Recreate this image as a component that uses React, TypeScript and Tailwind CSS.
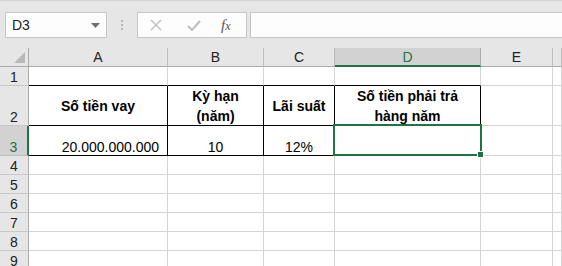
import type { ReactNode } from "react";

const green = "border-[#217346]";

type Cell = {
  text?: string;
  cls?: string;
  bold?: boolean;
  sel?: boolean;
  children?: ReactNode;
};

const ColHeader = ({ label, active }: { label: string; active?: boolean }) => (
  <div
    className={
      "flex items-center justify-center text-[14px] leading-none " +
      (active
        ? "bg-[#d2d2d2] text-[#217346] border-r border-r-[#ababab] border-b-2 border-b-[#217346]"
        : "bg-[#e6e6e6] text-[#222] border-r border-b border-[#bdbdbd] border-b-[#ababab]")
    }
  >
    {label}
  </div>
);

const RowHeader = ({ n, active }: { n: number; active?: boolean }) => (
  <div
    className={
      "flex items-end justify-center pb-[1px] text-[14px] leading-none " +
      (active
        ? "bg-[#d2d2d2] text-[#217346] border-r-2 border-r-[#217346] border-b border-b-[#bdbdbd]"
        : "bg-[#e6e6e6] text-[#222] border-r border-r-[#ababab] border-b border-b-[#c8c8c8]")
    }
  >
    {n}
  </div>
);

const GridCell = ({ text, cls = "", bold, sel, children }: Cell) => (
  <div
    className={
      "relative border-r border-b border-[#d4d4d4] text-[14px] text-black " +
      (bold ? "font-bold " : "") +
      cls
    }
  >
    {text}
    {children}
    {sel && (
      <>
        <div className={"absolute z-10 -top-[2px] -left-[2px] -right-[2px] -bottom-[1px] border-2 " + green} />
        <div className="absolute z-20 -right-[4px] -bottom-[3px] w-[7px] h-[7px] bg-[#217346] border border-white" />
      </>
    )}
  </div>
);

const blackRB = "border-r-black border-b-black";

export default function App() {
  const emptyRows = [4, 5, 6, 7, 8, 9];

  return (
    <div className="w-[562px] h-[266px] overflow-hidden bg-white font-['Liberation_Sans',Arial,sans-serif]">
      {/* formula bar */}
      <div className="h-[48px] bg-[#e6e6e6] border-t border-[#d2d2d2] flex items-start pt-[11px]">
        <div className="ml-[5px] w-[102px] h-[26px] bg-[#fdfdfd] border border-[#c6c6c6] flex items-center justify-between pl-[6px] pr-[6px]">
          <span className="text-[14px] text-[#222]">D3</span>
          <svg width="9" height="5" viewBox="0 0 9 5">
            <polygon points="0,0 9,0 4.5,5" fill="#707070" />
          </svg>
        </div>
        <div className="w-[30px] h-[26px] flex flex-col items-center justify-center gap-[2px]">
          <div className="w-[2px] h-[2px] bg-[#b4b4b4]" />
          <div className="w-[2px] h-[2px] bg-[#b4b4b4]" />
          <div className="w-[2px] h-[2px] bg-[#b4b4b4]" />
        </div>
        <div className="w-[110px] h-[26px] bg-[#fdfdfd] border border-[#c6c6c6] flex items-center pl-[12px]">
          <svg width="12" height="12" viewBox="0 0 12 12">
            <path d="M1 1 L11 11 M11 1 L1 11" stroke="#bdbdbd" strokeWidth="1.4" />
          </svg>
          <svg width="14" height="11" viewBox="0 0 14 11" className="ml-[25px]">
            <path d="M1 6 L5 10 L13 1" stroke="#bdbdbd" strokeWidth="2" fill="none" />
          </svg>
          <span className="ml-[20px] text-[15px] italic text-[#555] font-['Liberation_Serif',serif] leading-none">
            f<span className="text-[12px]">x</span>
          </span>
        </div>
        <div className="ml-[3px] flex-1 h-[26px] bg-[#fdfdfd] border-y border-l border-[#c6c6c6]" />
      </div>

      {/* sheet */}
      <div className="grid grid-cols-[29px_139px_96px_71px_146px_72px_1fr] grid-rows-[19px_19px_40px_30px_19px_19px_19px_19px_19px_19px]">
        {/* header row */}
        <div className="relative bg-[#e6e6e6] border-r border-b border-[#ababab]">
          <svg width="11" height="11" viewBox="0 0 11 11" className="absolute right-[3px] bottom-[3px]">
            <polygon points="11,0 11,11 0,11" fill="#b9b9b9" />
          </svg>
        </div>
        <ColHeader label="A" />
        <ColHeader label="B" />
        <ColHeader label="C" />
        <ColHeader label="D" active />
        <ColHeader label="E" />
        <ColHeader label="" />

        {/* row 1 */}
        <RowHeader n={1} />
        <GridCell cls="border-b-black" />
        <GridCell cls="border-b-black" />
        <GridCell cls="border-b-black" />
        <GridCell cls="border-b-black" />
        <GridCell />
        <GridCell />

        {/* row 2 */}
        <RowHeader n={2} />
        <GridCell bold text="Số tiền vay" cls={"flex items-center justify-center leading-[20px] " + blackRB} />
        <GridCell bold cls={"flex flex-col items-center justify-center leading-[20px] " + blackRB}>
          <span>Kỳ hạn</span>
          <span>(năm)</span>
        </GridCell>
        <GridCell bold text="Lãi suất" cls={"flex items-center justify-center leading-[20px] " + blackRB} />
        <GridCell bold cls={"flex flex-col items-center justify-center leading-[20px] " + blackRB}>
          <span>Số tiền phải trả</span>
          <span>hàng năm</span>
        </GridCell>
        <GridCell />
        <GridCell />

        {/* row 3 */}
        <RowHeader n={3} active />
        <GridCell text="20.000.000.000" cls={"flex items-end justify-end pr-[8px] pb-[1px] leading-none " + blackRB} />
        <GridCell text="10" cls={"flex items-end justify-center pb-[1px] leading-none " + blackRB} />
        <GridCell text="12%" cls={"flex items-end justify-center pb-[1px] leading-none " + blackRB} />
        <GridCell sel cls={blackRB} />
        <GridCell />
        <GridCell />

        {emptyRows.map((n) => (
          <div key={n} className="contents">
            <RowHeader n={n} />
            <GridCell />
            <GridCell />
            <GridCell />
            <GridCell />
            <GridCell />
            <GridCell />
          </div>
        ))}
      </div>
    </div>
  );
}
